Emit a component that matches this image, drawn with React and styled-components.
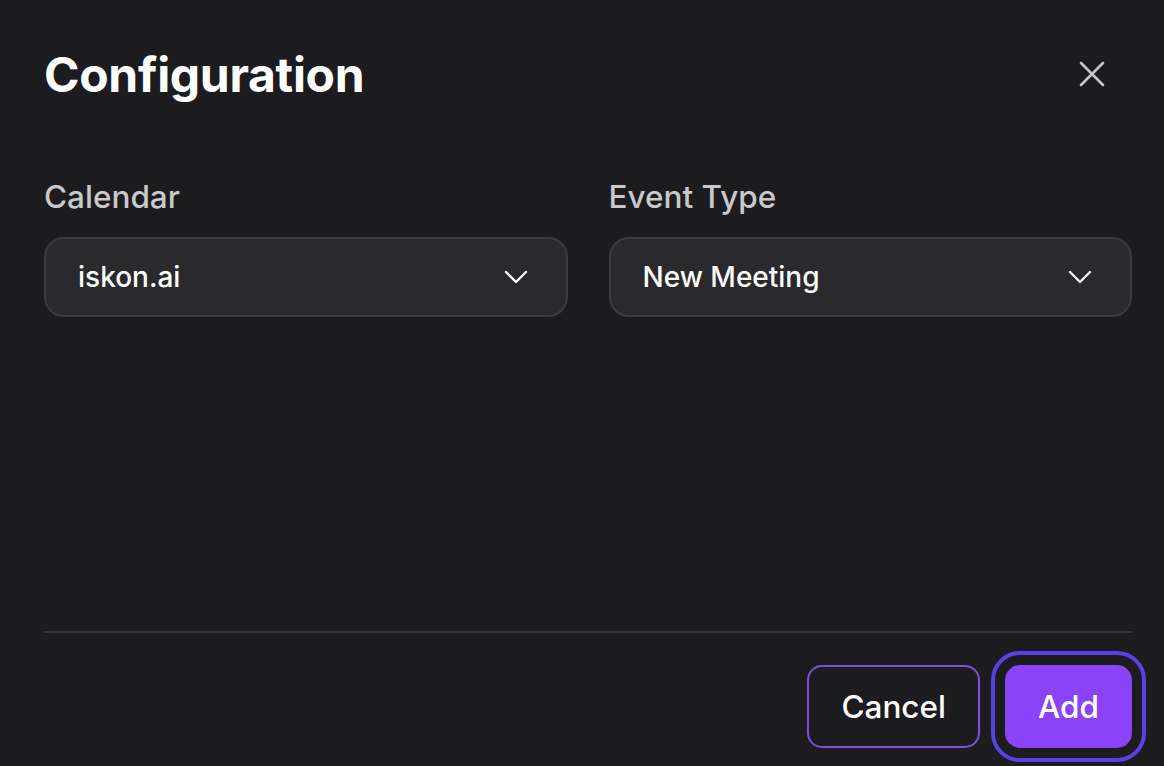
import React from "react";
import styled, { createGlobalStyle } from "styled-components";

const Global = createGlobalStyle`
  * { box-sizing: border-box; }
  html, body { margin: 0; padding: 0; background: #1c1b1e; }
  body { font-family: Inter, "Noto Sans", sans-serif; -webkit-font-smoothing: antialiased; }
`;

const Dialog = styled.div`
  height: 766px;
  display: flex;
  flex-direction: column;
  padding: 46px 32px 18px 44px;
  background: #1c1b1e;
`;

const Header = styled.div`
  display: flex;
  align-items: center;
  justify-content: space-between;
`;

const Title = styled.h1`
  margin: 0;
  font-size: 48px;
  line-height: 58px;
  font-weight: 700;
  color: #ffffff;
  letter-spacing: -0.3px;
`;

const CloseButton = styled.button`
  width: 36px;
  height: 36px;
  margin-right: 22px;
  margin-top: -2px;
  padding: 0;
  border: none;
  background: transparent;
  display: flex;
  align-items: center;
  justify-content: center;
  color: #c4c4c6;
  cursor: pointer;
`;

const Fields = styled.div`
  margin-top: 74px;
  display: grid;
  grid-template-columns: 1fr 1fr;
  gap: 41px;
`;

const Field = styled.div`
  display: flex;
  flex-direction: column;
  gap: 22px;
`;

const Label = styled.label`
  font-size: 31.5px;
  line-height: 37px;
  font-weight: 500;
  color: #c9c9cb;
`;

const Select = styled.div`
  height: 80px;
  border-radius: 20px;
  border: 2px solid #3c3c3f;
  background: #2a2a2d;
  display: flex;
  align-items: center;
  justify-content: space-between;
  padding: 0 38px 0 32px;
  font-size: 28px;
  font-weight: 500;
  color: #ffffff;
`;

const Spacer = styled.div`
  flex: 1;
`;

const Divider = styled.hr`
  margin: 0;
  border: none;
  height: 2px;
  background: #38373b;
`;

const Footer = styled.div`
  margin-top: 32px;
  display: flex;
  justify-content: flex-end;
  gap: 25px;
`;

const Button = styled.button`
  height: 83px;
  padding: 0 ${(p) => (p.$primary ? 31 : 32)}px;
  border-radius: 15px;
  font-family: Inter, "Noto Sans", sans-serif;
  font-size: 31.5px;
  font-weight: 500;
  color: #ffffff;
  border: 2px solid ${(p) => (p.$primary ? "#8a43f6" : "#7b4fe0")};
  background: ${(p) => (p.$primary ? "#8a43f6" : "transparent")};
  outline: ${(p) => (p.$primary ? "4px solid #5a40e6" : "none")};
  outline-offset: 10px;
  cursor: pointer;
`;

const Chevron = () => (
  <svg width="24" height="14" viewBox="0 0 24 14" fill="none">
    <path d="M2 2l10 10L22 2" stroke="#ffffff" strokeWidth="2.4" strokeLinecap="round" strokeLinejoin="round" />
  </svg>
);

const CloseIcon = () => (
  <svg width="26" height="26" viewBox="0 0 26 26" fill="none">
    <path d="M2 2l22 22M24 2L2 24" stroke="currentColor" strokeWidth="2.6" strokeLinecap="round" />
  </svg>
);

const fields = [
  { label: "Calendar", value: "iskon.ai" },
  { label: "Event Type", value: "New Meeting" },
];

export default function App() {
  return (
    <>
      <Global />
      <Dialog>
        <Header>
          <Title>Configuration</Title>
          <CloseButton aria-label="Close">
            <CloseIcon />
          </CloseButton>
        </Header>
        <Fields>
          {fields.map((f) => (
            <Field key={f.label}>
              <Label>{f.label}</Label>
              <Select>
                <span>{f.value}</span>
                <Chevron />
              </Select>
            </Field>
          ))}
        </Fields>
        <Spacer />
        <Divider />
        <Footer>
          <Button>Cancel</Button>
          <Button $primary>Add</Button>
        </Footer>
      </Dialog>
    </>
  );
}
